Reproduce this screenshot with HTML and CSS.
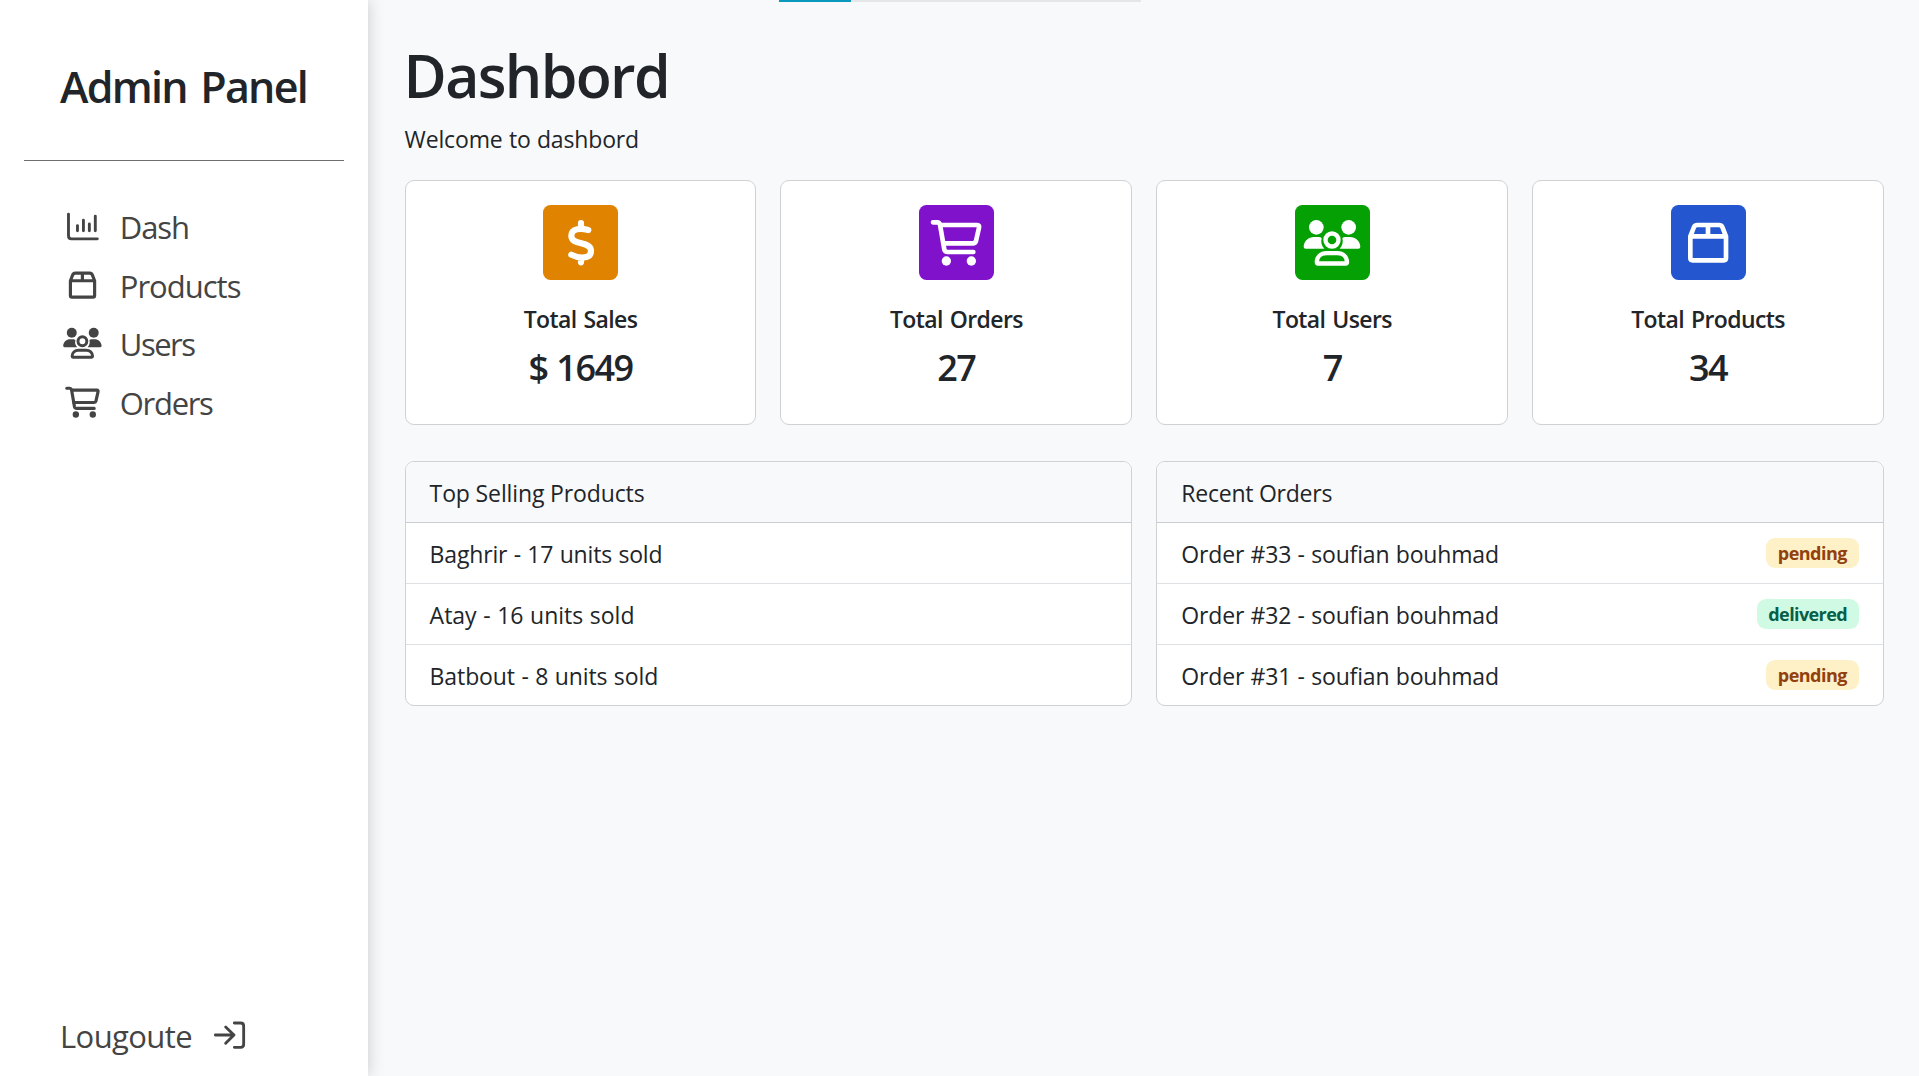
FILE: index.html
```html
<!DOCTYPE html>
<html lang="en">
<head>
<meta charset="utf-8">
<title>Admin Panel</title>
<link rel="stylesheet" href="styles.css">
</head>
<body>
<svg class="sprite" aria-hidden="true">
  <symbol id="cart" viewBox="22 40 180 144">
    <g fill="none" stroke="currentColor" stroke-width="14" stroke-linecap="round" stroke-linejoin="round">
      <path d="M43 50H56Q62 50 64 57L77 132Q79 139 87 139H164"/>
      <path d="M65 58H176Q183 58 181 66L172 106Q170 113 162 113H74"/>
    </g>
    <circle cx="83" cy="166" r="14" fill="currentColor"/><circle cx="158" cy="166" r="14" fill="currentColor"/>
  </symbol>
  <symbol id="users" viewBox="22 40 180 144">
    <g fill="currentColor">
      <circle cx="65" cy="65" r="22"/><circle cx="162" cy="65" r="22"/>
      <path d="M33 129Q27 129 27 123C28 106 42 94 58 94H72Q77 94 81 97C78 108 80 120 89 129Z"/>
      <path d="M191 129Q197 129 197 123C196 106 182 94 166 94H152Q147 94 143 97C146 108 144 120 135 129Z"/>
    </g>
    <g fill="none" stroke="currentColor" stroke-width="13">
      <circle cx="112" cy="103" r="19.5"/>
      <path d="M70 173.5H153Q157 173.5 157 169C156 153 145 142.500 129 142.500H95C79 142.500 67 153 66.500 169Q66.500 173.500 70 173.500Z"/>
    </g>
  </symbol>
  <symbol id="box" viewBox="22 40 180 144">
    <path fill="none" stroke="currentColor" stroke-width="14" stroke-linejoin="round" d="M59 92V157Q59 164 66 164H159Q166 164 166 157V92L155 64Q152 58 145 58H80Q73 58 70 64L59 92H166M112 58V92"/>
  </symbol>
  <symbol id="dollar" viewBox="22 40 180 144">
    <g fill="none" stroke="currentColor" stroke-width="18.500" stroke-linecap="round">
      <path d="M134 73C113 68 83 66 83 90C83 121 142 105 142 135C142 161 108 159 83 147M112 52V66M112 158V170"/>
    </g>
  </symbol>
  <symbol id="chart" viewBox="66 61 120 96">
    <g fill="none" stroke="currentColor" stroke-width="8.500" stroke-linecap="round" stroke-linejoin="round">
      <path d="M85 73V137Q85 146 94 146H170M111.500 107V122M129 91V122M146.500 102V122M164 79V122"/>
    </g>
  </symbol>
  <symbol id="logout" viewBox="540 58 120 96">
    <g fill="none" stroke="currentColor" stroke-width="8.500" stroke-linecap="round" stroke-linejoin="round">
      <path d="M556 106H612M587 82L612 106L587 131M613 70H632Q641 70 641 79V134Q641 143 632 143H613"/>
    </g>
  </symbol>
</svg>
<div class="layout">
  <aside class="sidebar">
    <h2 class="brand">Admin Panel</h2>
    <hr class="divider">
    <nav class="nav">
      <a class="nav-link nav-dash"><svg class="nav-icon"><use href="#chart"/></svg><span>Dash</span></a>
      <a class="nav-link nav-products"><svg class="nav-icon"><use href="#box"/></svg><span>Products</span></a>
      <a class="nav-link nav-users"><svg class="nav-icon"><use href="#users"/></svg><span>Users</span></a>
      <a class="nav-link nav-orders"><svg class="nav-icon"><use href="#cart"/></svg><span>Orders</span></a>
    </nav>
    <a class="logout"><span>Lougoute</span><svg class="logout-icon"><use href="#logout"/></svg></a>
  </aside>
  <main class="main">
    <div class="progress"><div class="progress-value"></div></div>
    <h1 class="title">Dashbord</h1>
    <p class="subtitle">Welcome to dashbord</p>
    <section class="stats">
      <article class="stat">
        <div class="stat-icon sales"><svg><use href="#dollar"/></svg></div>
        <h5 class="stat-label">Total Sales</h5><p class="stat-value">$ 1649</p>
      </article>
      <article class="stat">
        <div class="stat-icon orders"><svg><use href="#cart"/></svg></div>
        <h5 class="stat-label">Total Orders</h5><p class="stat-value">27</p>
      </article>
      <article class="stat">
        <div class="stat-icon users"><svg><use href="#users"/></svg></div>
        <h5 class="stat-label">Total Users</h5><p class="stat-value">7</p>
      </article>
      <article class="stat">
        <div class="stat-icon products"><svg><use href="#box"/></svg></div>
        <h5 class="stat-label">Total Products</h5><p class="stat-value">34</p>
      </article>
    </section>
    <section class="panels">
      <article class="panel">
        <header class="panel-header">Top Selling Products</header>
        <ul class="list">
          <li class="row"><span>Baghrir - 17 units sold</span></li>
          <li class="row row-atay"><span>Atay - 16 units sold</span></li>
          <li class="row row-batbout"><span>Batbout - 8 units sold</span></li>
        </ul>
      </article>
      <article class="panel">
        <header class="panel-header recent">Recent Orders</header>
        <ul class="list">
          <li class="row"><span>Order #33 - soufian bouhmad</span><span class="badge pending">pending</span></li>
          <li class="row"><span>Order #32 - soufian bouhmad</span><span class="badge delivered">delivered</span></li>
          <li class="row"><span>Order #31 - soufian bouhmad</span><span class="badge pending">pending</span></li>
        </ul>
      </article>
    </section>
  </main>
</div>
</body>
</html>
```
FILE: styles.css
```css
* { box-sizing: border-box; margin: 0; padding: 0; }
body {
  background: #f8f9fb;
  color: #212529;
  font-family: "Open Sans", "Noto Sans", sans-serif;
  font-size: 23px;
  overflow: hidden;
}
.sprite { display: block; width: 0; height: 0; }
.layout { display: flex; height: 1076px; }

.sidebar {
  display: flex;
  flex-direction: column;
  flex: none;
  width: 368px;
  padding: 61px 24px 16px;
  background: #fff;
  box-shadow: 0 0 15px rgba(33, 37, 41, .22);
  z-index: 1;
}
.brand { padding-left: 36px; font-size: 43px; font-weight: 600; line-height: 52px; letter-spacing: -1.75px; word-spacing: 4px; white-space: nowrap; }
.divider { margin-top: 47px; border: 0; border-top: 1px solid #6e6e6e; }
.nav { margin-top: 37px; }
.nav-link, .logout { display: flex; align-items: center; color: #444; font-size: 31px; line-height: 42px; }
.nav-link { height: 58.6px; padding-left: 38px; gap: 17px; }
.nav-icon { width: 40.8px; height: 32.6px; margin-bottom: 2px; }
.nav-dash { letter-spacing: -1.1px; }
.nav-products { letter-spacing: -1px; }
.nav-users { letter-spacing: -1.5px; }
.nav-orders { letter-spacing: -1.3px; }
.logout { height: 48px; margin-top: auto; padding-left: 36px; gap: 17.5px; letter-spacing: -.6px; }
.logout-icon { width: 40px; height: 32px; margin-bottom: 2px; }

.main { flex: 1; padding: 0 35px 0 36.6px; }
.progress { width: 362px; height: 2px; margin-left: 374.4px; background: #e5e6e8; }
.progress-value { width: 72px; height: 2px; background: #0899bd; }
.title { margin: 37px 0 0 -1px; font-size: 59px; font-weight: 600; line-height: 72px; letter-spacing: -1.65px; }
.subtitle { margin-top: 10px; line-height: 36px; letter-spacing: -.15px; word-spacing: .5px; }

.stats { display: grid; grid-template-columns: repeat(4, 1fr); gap: 24px; margin-top: 23px; }
.stat {
  display: flex;
  flex-direction: column;
  align-items: center;
  height: 245px;
  padding-top: 24px;
  border: 1px solid #d0d1d3;
  border-radius: 9px;
  background: #fff;
}
.stat-icon { display: grid; place-items: center; width: 75px; height: 75px; border-radius: 7.5px; color: #fff; }
.stat-icon svg { width: 60px; height: 48px; }
.sales { background: #df8300; }
.orders { background: #8012cb; }
.users { background: #04a004; }
.products { background: #2457cf; }
.stat-label { margin-top: 25px; font-size: 23px; font-weight: 600; line-height: 29px; letter-spacing: -.6px; word-spacing: 1.5px; }
.stat-value { margin-top: 12px; font-size: 36px; font-weight: 600; line-height: 44px; letter-spacing: -1.5px; word-spacing: 1px; }

.panels { display: grid; grid-template-columns: 1fr 1fr; gap: 24px; margin-top: 36px; }
.panel { overflow: hidden; border: 1px solid #d0d1d3; border-radius: 9px; background: #fff; }
.panel-header { height: 61px; padding: 1px 24px 0; border-bottom: 1px solid #cbcccf; background: #f8f9fb; line-height: 61px; letter-spacing: -.13px; }
.panel-header.recent { letter-spacing: -.24px; }
.list { list-style: none; }
.row { display: flex; align-items: center; justify-content: space-between; height: 61px; padding: 0 24px; border-bottom: 1px solid #dee0e4; line-height: 32px; letter-spacing: -.17px; word-spacing: .6px; }
.row > span:first-child { padding-top: 2px; }
.row:last-child { height: 60px; border-bottom: 0; }
.row-atay { letter-spacing: 0; }
.row-batbout { letter-spacing: -.1px; }
.badge { height: 30px; padding: 0 12px 0 11.500px; border-radius: 9px; font-size: 18px; font-weight: 700; line-height: 31px; letter-spacing: -.5px; }
.pending { background: #fef1c7; color: #92400e; }
.delivered { background: #d0fae4; color: #065f46; letter-spacing: -.6px; }
```
